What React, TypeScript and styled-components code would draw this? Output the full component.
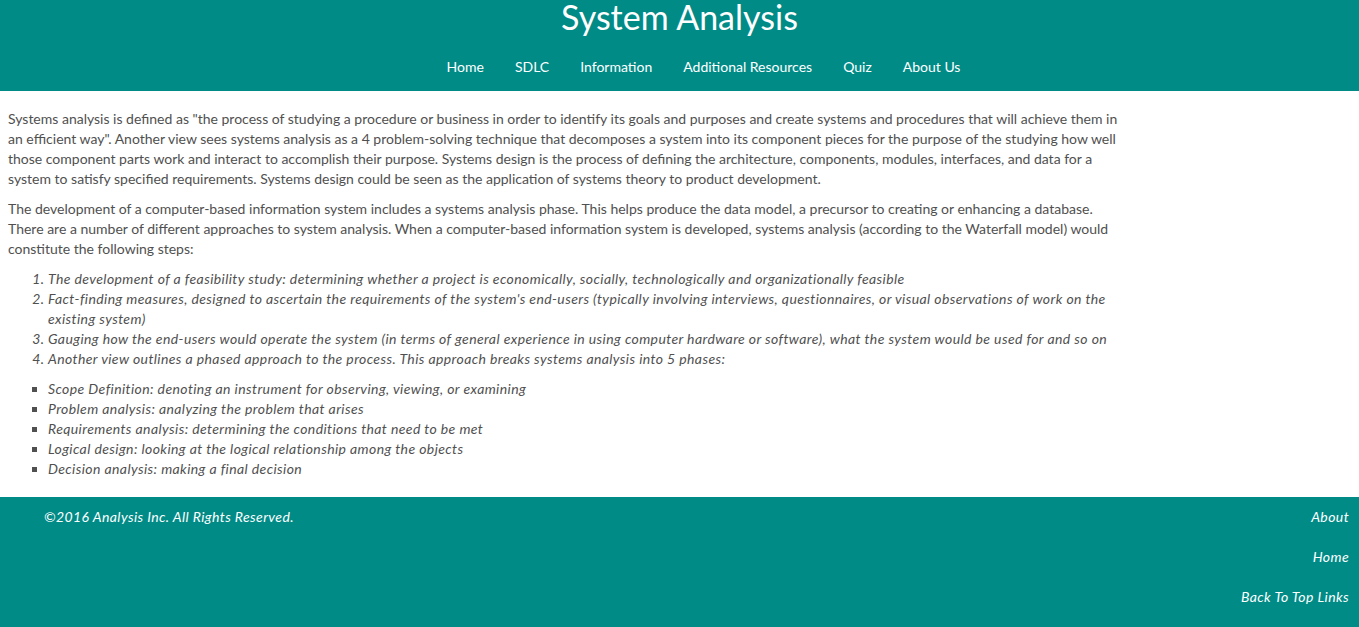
import * as React from 'react'
import styled, { createGlobalStyle } from 'styled-components'

const GlobalStyle = createGlobalStyle`
body {
  margin: 0;
  background: #ffffff;
  font-family: Lato, 'Open Sans', sans-serif;
}
`

const Header = styled.header`
background-color: #008b87;
height: 91px;
display: flex;
flex-direction: column;
align-items: center;
`

const Title = styled.h1`
margin: 0;
color: #ffffff;
font-weight: normal;
font-size: 34px;
line-height: 34px;
`

const Nav = styled.nav`
display: flex;
gap: 31px;
margin-top: 24px;
padding-left: 48px;
`

const NavLink = styled.a`
color: #ffffff;
font-size: 14px;
text-decoration: none;
`

const Main = styled.main`
padding: 18px 8px 8px 8px;
width: 1118px;
color: #505050;
font-size: 14px;
line-height: 20px;
`

const Para = styled.p`
margin: 0 0 10px 0;
`

const Steps = styled.ol`
margin: 0 0 10px 0;
padding-left: 40px;
font-style: italic;
letter-spacing: 0.4px;
`

const Phases = styled.ul`
margin: 0 0 10px 0;
padding-left: 40px;
font-style: italic;
letter-spacing: 0.4px;
list-style-type: square;
`

const Footer = styled.footer`
background-color: #008b87;
display: flex;
justify-content: space-between;
padding: 10px 10px 20px 44px;
color: #ffffff;
font-style: italic;
font-size: 14px;
line-height: 20px;
letter-spacing: 0.4px;
`

const FooterLinks = styled.div`
display: flex;
flex-direction: column;
align-items: flex-end;
gap: 20px;
`

const FooterLink = styled.a`
color: #ffffff;
text-decoration: none;
`

const navItems = ['Home', 'SDLC', 'Information', 'Additional Resources', 'Quiz', 'About Us']

const steps = [
  'The development of a feasibility study: determining whether a project is economically, socially, technologically and organizationally feasible',
  "Fact-finding measures, designed to ascertain the requirements of the system's end-users (typically involving interviews, questionnaires, or visual observations of work on the existing system)",
  'Gauging how the end-users would operate the system (in terms of general experience in using computer hardware or software), what the system would be used for and so on',
  'Another view outlines a phased approach to the process. This approach breaks systems analysis into 5 phases:',
]

const phases = [
  'Scope Definition: denoting an instrument for observing, viewing, or examining',
  'Problem analysis: analyzing the problem that arises',
  'Requirements analysis: determining the conditions that need to be met',
  'Logical design: looking at the logical relationship among the objects',
  'Decision analysis: making a final decision',
]

const App: React.FC = () => {
  return (
    <div>
      <GlobalStyle />
      <Header>
        <Title>System Analysis</Title>
        <Nav>
          {navItems.map(item => <NavLink key={item} href="#">{item}</NavLink>)}
        </Nav>
      </Header>
      <Main>
        <Para>
          Systems analysis is defined as "the process of studying a procedure or business in order to identify its goals and purposes and create systems and procedures that will achieve them in an efficient way". Another view sees systems analysis as a 4 problem-solving technique that decomposes a system into its component pieces for the purpose of the studying how well those component parts work and interact to accomplish their purpose. Systems design is the process of defining the architecture, components, modules, interfaces, and data for a system to satisfy specified requirements. Systems design could be seen as the application of systems theory to product development.
        </Para>
        <Para>
          The development of a computer-based information system includes a systems analysis phase. This helps produce the data model, a precursor to creating or enhancing a database. There are a number of different approaches to system analysis. When a computer-based information system is developed, systems analysis (according to the Waterfall model) would constitute the following steps:
        </Para>
        <Steps>
          {steps.map(s => <li key={s}>{s}</li>)}
        </Steps>
        <Phases>
          {phases.map(p => <li key={p}>{p}</li>)}
        </Phases>
      </Main>
      <Footer>
        <span>©2016 Analysis Inc. All Rights Reserved.</span>
        <FooterLinks>
          <FooterLink href="#">About</FooterLink>
          <FooterLink href="#">Home</FooterLink>
          <FooterLink href="#">Back To Top Links</FooterLink>
        </FooterLinks>
      </Footer>
    </div>
  )
}

export default App
